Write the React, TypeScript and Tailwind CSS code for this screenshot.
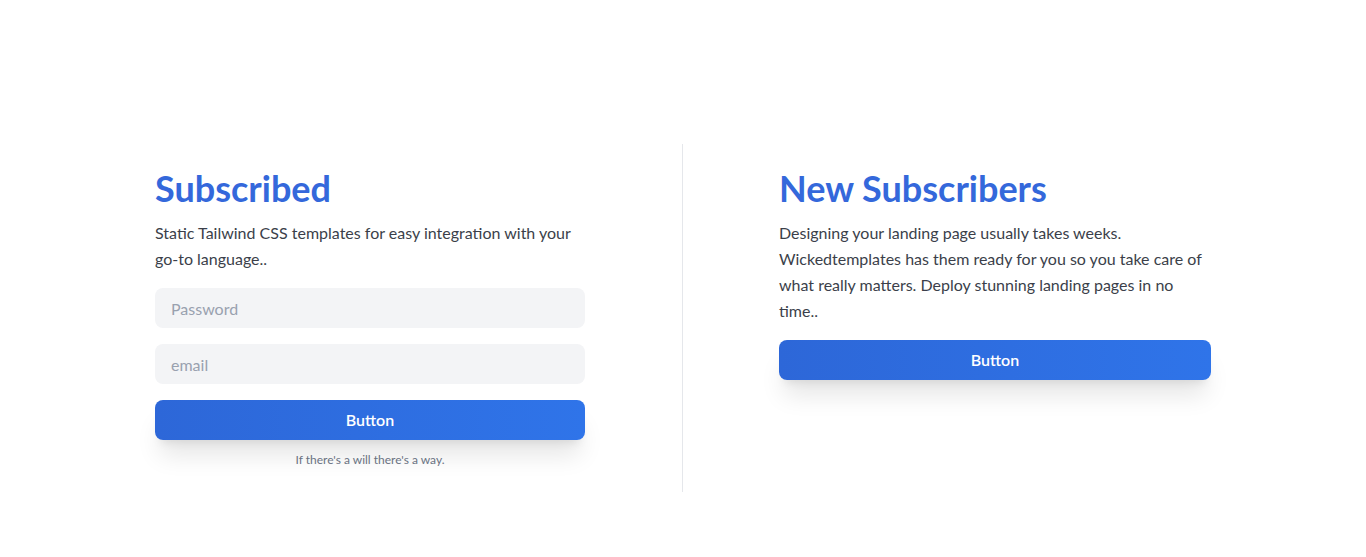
export default function App() {
  return (
    <div className="min-h-[557px] bg-white font-['Lato','Noto_Sans',sans-serif] text-gray-700">
      <div className="pt-[144px] grid grid-cols-2">
        {/* Subscribed */}
        <div className="border-r border-gray-200 pl-[155px] pr-[97px] py-6">
          <h2 className="text-4xl leading-10 font-bold text-[#3468db]">Subscribed</h2>
          <p className="mt-3 text-base leading-[26px] text-[#3b3f4a]">
            Static Tailwind CSS templates for easy integration with your go-to language..
          </p>
          <div className="mt-4 flex flex-col gap-4">
            <input
              placeholder="Password"
              className="h-10 w-full rounded-lg bg-gray-100 px-4 text-base text-gray-700 placeholder:text-gray-400 outline-none"
            />
            <input
              placeholder="email"
              className="h-10 w-full rounded-lg bg-gray-100 px-4 text-base text-gray-700 placeholder:text-gray-400 outline-none"
            />
            <button className="h-10 w-full rounded-lg bg-gradient-to-r from-[#2d67d8] to-[#2f74e9] text-base font-semibold text-white shadow-xl">
              Button
            </button>
          </div>
          <p className="mt-3 text-center text-xs leading-4 text-gray-500">If there's a will there's a way.</p>
        </div>

        {/* New Subscribers */}
        <div className="pl-[96px] pr-[155px] py-6">
          <h2 className="text-4xl leading-10 font-bold text-[#3468db]">New Subscribers</h2>
          <p className="mt-3 text-base leading-[26px] text-[#3b3f4a]">
            Designing your landing page usually takes weeks. Wickedtemplates has them ready for you so you take care of
            what really matters. Deploy stunning landing pages in no time..
          </p>
          <button className="mt-4 h-10 w-full rounded-lg bg-gradient-to-r from-[#2d67d8] to-[#2f74e9] text-base font-semibold text-white shadow-xl">
            Button
          </button>
        </div>
      </div>
    </div>
  )
}
